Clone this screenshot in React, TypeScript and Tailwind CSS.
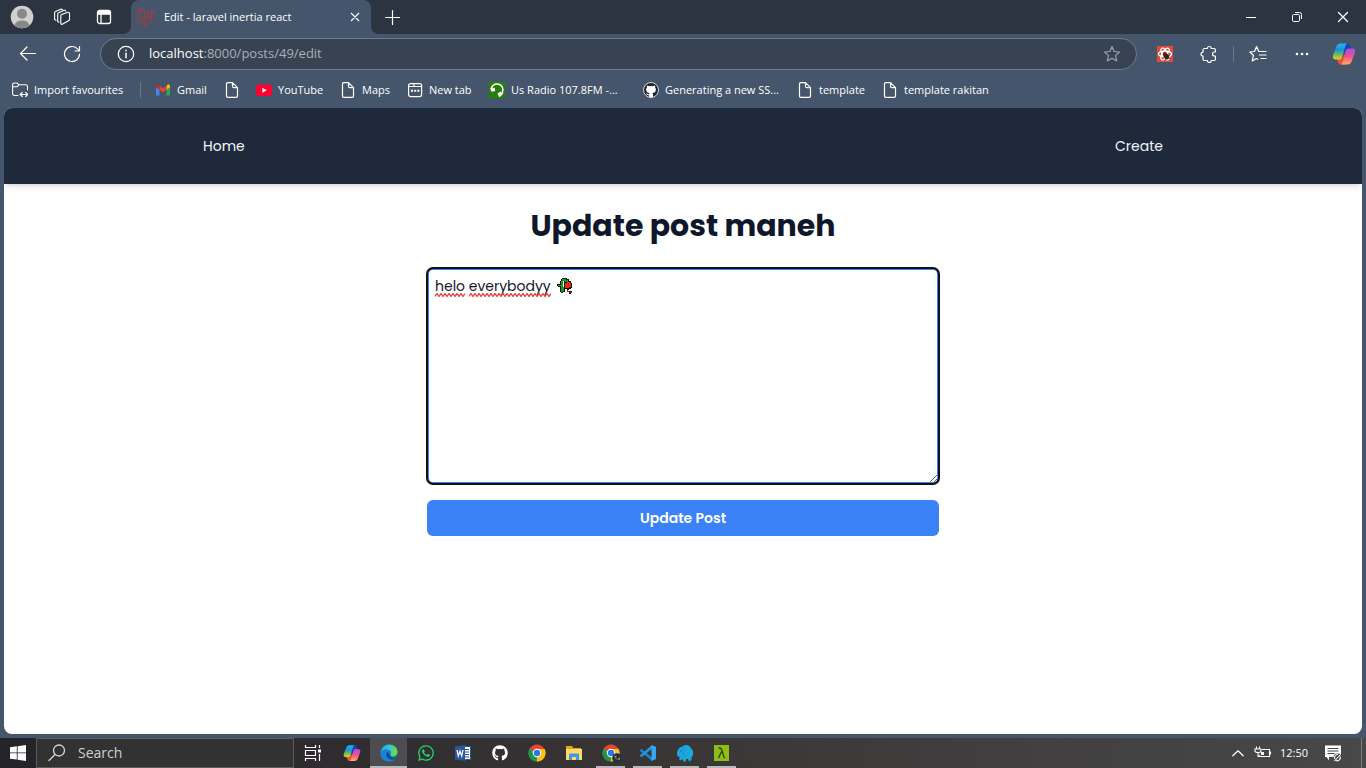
import React from 'react';
import { FaGithub, FaLaravel, FaWhatsapp } from 'react-icons/fa';

type IconProps = { className?: string };

const line = {
  fill: 'none',
  stroke: 'currentColor',
  strokeLinecap: 'round' as const,
  strokeLinejoin: 'round' as const,
};

function Avatar() {
  return (
    <svg viewBox="0 0 24 24" className="size-6">
      <clipPath id="avatar"><circle cx="12" cy="12" r="11.3" /></clipPath>
      <g clipPath="url(#avatar)">
        <rect width="24" height="24" fill="#d2d0ce" />
        <circle cx="12" cy="8.8" r="5" fill="#8a8886" />
        <path d="M4 24c0-6 3-8.500 8-8.500s8 2.500 8 8.500z" fill="#8a8886" />
      </g>
    </svg>
  );
}

function WorkspacesIcon() {
  return (
    <svg viewBox="0 0 18 18" className="size-[18px]" {...line} strokeWidth="1.1">
      <path d="M8.600 6.600 14.800 4.300a1.200 1.200 0 0 1 1.700 1.100v6a1.500 1.500 0 0 1-1 1.400l-5.800 3.300A1.200 1.200 0 0 1 7.800 15V8a1.500 1.500 0 0 1 .8-1.400z" />
      <path d="M6 14.200 4.700 13.500V6.200a1.500 1.500 0 0 1 1-1.400l5.300-2.500a1.500 1.500 0 0 1 1.800.7" />
      <path d="M3 12.200 1.600 11.500V4.800a1.500 1.500 0 0 1 1-1.400L7.600 1.200a1.500 1.500 0 0 1 1.700.5" />
    </svg>
  );
}

function TabActionsIcon() {
  return (
    <svg viewBox="0 0 16 16" className="size-4" {...line} strokeWidth="1.3">
      <rect x="1.5" y="1.500" width="13" height="13" rx="2" />
      <path d="M2 2.500h12v2.500H2z" fill="currentColor" />
      <path d="M5 5v9" />
    </svg>
  );
}

function CloseIcon({ className }: IconProps) {
  return (
    <svg viewBox="0 0 12 12" className={className} {...line} strokeWidth="1.3">
      <path d="m1.500 1.500 9 9M10.500 1.500l-9 9" />
    </svg>
  );
}

function PlusIcon() {
  return (
    <svg viewBox="0 0 16 16" className="size-4" {...line} strokeWidth="1.200">
      <path d="M8.500 1.500v14M1.500 8.500h14" />
    </svg>
  );
}

function BackIcon() {
  return (
    <svg viewBox="0 0 18 18" className="size-[18px]" {...line} strokeWidth="1.2">
      <path d="M16.500 8.500H1.500M8 2 1.500 8.500 8 15" />
    </svg>
  );
}

function ReloadIcon() {
  return (
    <svg viewBox="0 0 18 18" className="size-[18px]" {...line} strokeWidth="1.2">
      <path d="M16.500 9a7.500 7.500 0 1 1-2.300-5.400l2 2M16.500 1.500v4.500H12" />
    </svg>
  );
}

function InfoIcon() {
  return (
    <svg viewBox="0 0 18 18" className="size-[18px]" {...line} strokeWidth="1.2">
      <circle cx="9" cy="9" r="7.700" />
      <path d="M9 8.200v4.500M9 5.300v.5" strokeWidth="1.500" />
    </svg>
  );
}

function StarIcon() {
  return (
    <svg viewBox="0 0 18 18" className="size-[18px]" {...line} strokeWidth="1.200">
      <path d="m9 1.500 2.200 5 5.300.6-4 3.500 1.200 5.300L9 13.200l-4.700 2.700 1.200-5.300-4-3.500 5.300-.6z" />
    </svg>
  );
}

function FavouritesIcon() {
  return (
    <svg viewBox="0 0 18 18" className="size-[18px]" {...line} strokeWidth="1.2">
      <path d="M11 6.500H9.800L7.600 1.500 5.500 6.500l-4.700.5 3.600 3.300-1.200 5.700 4.300-2.500 1.300.8M12 6.500h5M10.500 10h6.500M12 13.500h5" />
    </svg>
  );
}

function PuzzleIcon() {
  return (
    <svg viewBox="0 0 18 18" className="size-[18px]" {...line} strokeWidth="1.2">
      <path d="M4.500 3.500h2.800a2 2 0 1 1 4 0h2.600a1.500 1.500 0 0 1 1.500 1.500v2h-.9a2 2 0 1 0 0 4h.9v3a1.500 1.500 0 0 1-1.500 1.500h-2.600a2 2 0 0 1-4 0H4.500A1.500 1.500 0 0 1 3 14v-2.800a2 2 0 1 1 0-4V5a1.500 1.500 0 0 1 1.500-1.500z" />
    </svg>
  );
}

function InertiaExtensionIcon() {
  return (
    <svg viewBox="0 0 16 16" className="size-4">
      <rect width="16" height="16" fill="#dd4b39" />
      <g fill="none" stroke="#fff" strokeWidth="1.300">
        <ellipse cx="8" cy="8" rx="6.500" ry="2.900" />
        <ellipse cx="8" cy="8" rx="6.500" ry="2.900" transform="rotate(60 8 8)" />
        <ellipse cx="8" cy="8" rx="6.500" ry="2.900" transform="rotate(120 8 8)" />
      </g>
      <ellipse cx="9.500" cy="10.500" rx="2.400" ry="3" fill="#32201e" transform="rotate(-35 9.500 10.500)" />
      <circle cx="7.500" cy="8" r="1.400" fill="#32201e" />
      <path d="m6 11.500 7-2.500M8 14l4-7M6 9.500l7 3" stroke="#32201e" strokeWidth=".7" />
    </svg>
  );
}

function CopilotIcon({ className, id }: IconProps & { id: string }) {
  return (
    <svg viewBox="0 0 24 24" className={className}>
      <defs>
        <linearGradient id={`${id}-a`} x1="0" y1="0" x2="0" y2="1">
          <stop offset="0" stopColor="#25b5ee" />
          <stop offset=".4" stopColor="#1a91dc" />
          <stop offset=".7" stopColor="#6fbf58" />
          <stop offset="1" stopColor="#f5c51c" />
        </linearGradient>
        <linearGradient id={`${id}-b`} x1="0" y1="0" x2="0" y2="1">
          <stop offset="0" stopColor="#a34fe8" />
          <stop offset=".5" stopColor="#ee5094" />
          <stop offset="1" stopColor="#ffb055" />
        </linearGradient>
      </defs>
      <path d="M10 1.500h5c2 0 2.700 1 3.300 3l.8 2.700h-3.600c-1.500 0-2.300.8-2.800 2.200l-1 3z" fill="#1941bd" />
      <path d="M14 22.500H9c-2 0-2.700-1-3.300-3l-.8-2.700h3.600c1.500 0 2.300-.8 2.800-2.200l1-3z" fill="#ee5237" />
      <path d="M15 1.500H8.500c-2.300 0-3.600 1.500-4.500 4L1.200 12.700c-1 3 .2 4.800 2.600 4.800h3.600c1.500 0 2.300-.8 2.800-2.200l3-10.600c.4-1.500.8-2.600 1.800-3.200z" fill={`url(#${id}-a)`} />
      <path d="M9 22.500h6.500c2.300 0 3.600-1.500 4.500-4l2.800-7.200c1-3-.2-4.800-2.600-4.800h-3.600c-1.500 0-2.300.8-2.800 2.200l-3 10.600c-.4 1.500-.8 2.600-1.800 3.200z" fill={`url(#${id}-b)`} />
    </svg>
  );
}

function FolderImportIcon() {
  return (
    <svg viewBox="0 0 16 16" className="size-4" {...line} strokeWidth="1.100">
      <path d="M6 13.500H2.200A1.700 1.700 0 0 1 .6 11.800V2.700A1.700 1.700 0 0 1 2.300 1H5l2 1.800h6.800a1.700 1.700 0 0 1 1.700 1.700V8M.8 4.800H5l2-2" />
      <path d="M8.500 12.500h7M10.200 10.500l-2 2 2 2M13.700 10.500l2 2-2 2" />
    </svg>
  );
}

function GmailIcon() {
  return (
    <svg viewBox="0 0 16 16" className="size-4">
      <path d="M1 4.500v8a1 1 0 0 0 1 1h2.500V7.200z" fill="#4285f4" />
      <path d="M15 4.500v8a1 1 0 0 1-1 1h-2.500V7.200z" fill="#34a853" />
      <path d="M11.500 3.800v4L15 5.200v-1c0-1.500-1.600-2.200-2.700-1.300z" fill="#fbbc04" />
      <path d="M1 5.200 4.500 7.800v-4l-.8-.9C2.600 2 1 2.700 1 4.200z" fill="#c5221f" />
      <path d="M4.500 3.700 8 6.300l3.500-2.600v4.100L8 10.400 4.500 7.800z" fill="#ea4335" />
    </svg>
  );
}

function FileIcon() {
  return (
    <svg viewBox="0 0 16 16" className="size-4" {...line} strokeWidth="1.200">
      <path d="M8.500.6H3.800A1.300 1.300 0 0 0 2.500 1.900v12.200a1.300 1.300 0 0 0 1.300 1.300h8.400a1.300 1.300 0 0 0 1.300-1.300V5.600zM8.500.6v3.700a1.300 1.300 0 0 0 1.300 1.300h3.700" />
    </svg>
  );
}

function YouTubeIcon() {
  return (
    <svg viewBox="0 0 16 16" className="size-4">
      <rect y="2.500" width="16" height="11.500" rx="2.800" fill="#ff0033" />
      <path d="M6.300 5.700v5L10.700 8.200z" fill="#fff" />
    </svg>
  );
}

function NewTabIcon() {
  return (
    <svg viewBox="0 0 16 16" className="size-4" {...line} strokeWidth="1.200">
      <rect x="1.600" y="1.600" width="13" height="13" rx="2" />
      <path d="M2 4.500h5V2.500M7 4.500h7.500" />
      <path d="M4 8.800h2M7.200 8.800h2M10.400 8.800h2" strokeWidth="2" strokeLinecap="butt" />
    </svg>
  );
}

function RadioIcon() {
  return (
    <svg viewBox="0 0 16 16" className="size-4">
      <rect width="16" height="16" fill="#258009" />
      <path d="M2.300 7C3 3.500 5.500 2 8.500 2.100c4 .2 6.500 4 5 8.400-.6 1.600-1.700 3-3 3.700" fill="none" stroke="#fff" strokeWidth="1.500" />
      <path d="M1.200 6.500 5.500 5.800 6.300 9 2.600 9.800z" fill="#fff" />
      <path d="m8.500 11.500 3.200-2 2 2.500-3.500 3.200z" fill="#fff" />
    </svg>
  );
}

function GithubBadge() {
  return (
    <svg viewBox="0 0 16 16" className="size-4">
      <circle cx="8" cy="8" r="7.500" fill="#20252b" stroke="#e4e6e8" strokeWidth=".9" />
      <path d="M6.100 15.200v-2c-2 .4-2.500-.8-3-1.600 1.300-.2 1.400 1 3 .6.100-.5.300-.9.500-1.100-2-.3-3.500-1.200-3.500-3.700 0-.8.300-1.500.8-2-.2-.8-.1-1.500.1-2 .7 0 1.400.4 2 .8a7 7 0 0 1 4 0c.6-.4 1.300-.8 2-.8.200.5.300 1.200.1 2 .5.500.8 1.200.8 2 0 2.500-1.500 3.400-3.500 3.700.4.400.6 1 .6 1.700v2.400z" fill="#fff" />
    </svg>
  );
}

function WindowsIcon() {
  return (
    <svg viewBox="0 0 16 16" className="size-4" fill="#fff">
      <path d="M0 2.300 6.800 1.300v6.200H0zM7.600 1.200 16 0v7.500H7.600zM0 8.300h6.800v6.300L0 13.700zM7.600 8.300H16V16l-8.400-1.200z" />
    </svg>
  );
}

function SearchIcon() {
  return (
    <svg viewBox="0 0 18 18" className="size-[18px] shrink-0" {...line} strokeWidth="1.300">
      <circle cx="11" cy="6.500" r="5.500" />
      <path d="m7 10.500-6 6" />
    </svg>
  );
}

function TaskViewIcon() {
  return (
    <svg viewBox="0 0 18 18" className="size-[18px]" fill="none" stroke="#fff" strokeWidth="1.200">
      <path d="M1.500 1v2.500h10V1M1.500 6.500h10v5h-10zM1.500 17v-2.500h10V17M15.500 1v3M15.500 10v7" />
      <path d="M14 5.500h3v3h-3z" fill="#fff" stroke="none" />
    </svg>
  );
}

function EdgeIcon() {
  return (
    <svg viewBox="0 0 18 18" className="size-[18px]">
      <defs>
        <linearGradient id="edge-top" x1="0" y1="0" x2="1" y2=".3">
          <stop offset="0" stopColor="#249fe3" />
          <stop offset=".5" stopColor="#30c5d4" />
          <stop offset="1" stopColor="#69dc4d" />
        </linearGradient>
      </defs>
      <circle cx="9" cy="9" r="8.500" fill="#1473bd" />
      <path d="M.5 9.500C.8 4 4.300.5 9 .5c5 0 8.500 3.400 8.500 7.500 0 2.700-2 4.400-4.600 4.400-1.700 0-2.800-.6-2.800-1.300 0-.5.900-.8.900-2 0-2-2-3.500-4.500-3.500S1 7 .5 9.500z" fill="url(#edge-top)" />
      <path d="M7.200 8.200C5 10.500 6 15.500 11.500 16c2.200.2 3.700-.8 4.500-1.700-1.500 2-3.800 3.200-6.500 3.200C4 17.500.5 14 .5 9.500.8 7.200 3 5.500 6 5.600c3 0 5 1.500 5 3.500 0 1-.7 1.300-.9 1.900-.9-.2-1.600-2.800-2.900-2.800z" fill="#1b83d3" />
      <path d="M7 8.300c-1.500 2.500.2 6.300 4.500 7 2 .3 3.800-.4 4.600-1.300-2 .8-5.600.2-6-2.700C9.200 11 9 8.200 7 8.300z" fill="#0b4a8d" />
    </svg>
  );
}

function WordIcon() {
  return (
    <svg viewBox="0 0 18 18" className="size-[18px]">
      <path d="M9 2.500h7.500v13H9z" fill="#fff" stroke="#2b579a" />
      <path d="M11 5.500h4M11 8h4M11 10.500h4M11 13h4" stroke="#2b579a" />
      <path d="M1 2.500 11 1v16L1 15.500z" fill="#2b579a" />
      <path d="m3 6 1.300 6L6 7l1.700 5L9 6" fill="none" stroke="#fff" strokeWidth="1.200" />
    </svg>
  );
}

function ChromeIcon() {
  return (
    <svg viewBox="0 0 18 18" className="size-[18px]">
      <path d="M9 9 1.640 4.750A8.500 8.500 0 0 1 16.360 4.750z" fill="#ea4335" />
      <path d="M9 9 16.360 4.750A8.500 8.500 0 0 1 9 17.500z" fill="#fbbc04" />
      <path d="M9 9v8.500A8.500 8.500 0 0 1 1.640 4.750z" fill="#34a853" />
      <path d="M9 5h7.500a8.500 8.500 0 0 1-7.500 12.500L12.500 11z" fill="#fbc116" />
      <path d="M1.640 4.750 5.500 11 9 13l-1.200 4.500A8.500 8.500 0 0 1 1.640 4.750z" fill="#229342" />
      <circle cx="9" cy="9" r="4.200" fill="#fff" />
      <circle cx="9" cy="9" r="3.200" fill="#2878e8" />
    </svg>
  );
}

function ChromeProfileIcon() {
  return (
    <span className="relative flex">
      <ChromeIcon />
      <svg viewBox="0 0 10 10" className="absolute -right-0.5 -bottom-px size-[10px]">
        <circle cx="5" cy="5" r="4.800" fill="#15344b" />
        <path d="M2 2.500 7.500 4 8 7 4 6z" fill="#c58c54" />
        <circle cx="5.500" cy="4.500" r="1.200" fill="#0c1117" />
      </svg>
    </span>
  );
}

function ExplorerIcon() {
  return (
    <svg viewBox="0 0 18 18" className="size-[18px]">
      <path d="M1 2h6l1.500 2H16v4H1z" fill="#e5a50e" />
      <path d="M1 5h16v11H1z" fill="#ffd967" />
      <path d="M4 16V10.500a1 1 0 0 1 1-1h8a1 1 0 0 1 1 1V16h-3v-3H7v3z" fill="#3d9ae6" />
    </svg>
  );
}

function VsCodeIcon() {
  return (
    <svg viewBox="0 0 18 18" className="size-[18px]">
      <path d="M1.200 5.800 2.500 4.900 13 13.500V17L1 7z" fill="#1b86cf" />
      <path d="M1 11.200 13 1v3.800L2.500 13.200 1.200 12.300z" fill="#2196df" />
      <path d="M12.500 1 17 3v12l-4.500 2z" fill="#34a9f0" />
    </svg>
  );
}

function HeidiIcon() {
  return (
    <svg viewBox="0 0 18 18" className="size-[18px]">
      <path d="M9 1c2.500-.5 5 .5 5.800 3C17 6 18 9 16.500 12l-1 1.500V16l-2.500 1.500L12 15h-2v2.500H7.500L6.500 15l-2 1.500-1.500-1.500L4 13C1.500 13 .7 11 1 8.500 1.500 5 3.500 3 6 2.500z" fill="#1ca6dc" />
      <path d="M8 3.500C6 6 6 9.500 8.500 11" fill="none" stroke="#138fc2" strokeWidth=".9" />
      <circle cx="4.500" cy="7" r=".6" fill="#0b5c86" />
    </svg>
  );
}

function LambdaIcon() {
  return (
    <svg viewBox="0 0 16 16" className="size-4">
      <rect y="0" width="15" height="16" fill="#8cbd18" />
      <path d="M4.500 3h1.300c1.200 0 1.500.6 2 2l2.200 7c.2.700.5.800 1.200.7M7.600 6.500 4.500 13" fill="none" stroke="#33420e" strokeWidth="1.300" />
    </svg>
  );
}

function BatteryIcon() {
  return (
    <svg viewBox="0 0 18 14" className="h-[14px] w-[18px]" fill="none" stroke="#fff" strokeWidth="1.100">
      <path d="M8 3.500h7.500v7H5.500V9M16.500 5.500v3" />
      <path d="M2.500.5v2.500M5.500.5v2.500M1 3h6v2c0 1-1 1.500-3 1.500S1 6 1 5zM4 6.500v4h2" />
      <path d="M7 6h3v3H7z" fill="#fff" stroke="none" />
    </svg>
  );
}

function NotificationsIcon() {
  return (
    <svg viewBox="0 0 18 18" className="size-[18px]">
      <path d="M1 1.500h16V13H5v3.500L2.500 13H1z" fill="#fff" />
      <path d="M3.500 4.500h11M3.500 7h11M3.500 9.500h7" stroke="#444" />
      <circle cx="13.500" cy="13.500" r="4" fill="#454545" />
      <path d="M11 15a3 3 0 0 1 3-4.500M16 12.500a3 3 0 0 1-4 4M10.500 17l6-6.500" stroke="#fff" fill="none" strokeWidth="1.100" />
    </svg>
  );
}

function WiltedRose() {
  return (
    <svg viewBox="0 0 16 16" className="size-4" shapeRendering="crispEdges">
      <path d="M5 0h5v1h2v2h2v2h1v5h-1v1h-2v1h-2v-1H8v3H6v1H4v-1H3V9H1V8H0V6h3V3h1V1h1z" fill="#0d130d" />
      <path d="M5 1h4v1h2v2H8V3H6v6h1v4H6v1H4V8H1V7h3V3h1z" fill="#159a2c" />
      <path d="M6 3h1v6H6z" fill="#fff" />
      <path d="M8 5h2V4h3v1h1v4h-2v1H8z" fill="#e32b10" />
      <path d="M10 12h1v1h1v1h3v1h-3v-1h-2z" fill="#b81d14" />
      <path d="M10 11h2v1h-2zM12 13h3v1h-3zM12 15h2v1h-2z" fill="#0d130d" />
    </svg>
  );
}

const bookmarks = [
  { label: 'Gmail', icon: <GmailIcon />, width: 'w-[31px]' },
  { label: '', icon: <FileIcon />, width: '' },
  { label: 'YouTube', icon: <YouTubeIcon />, width: 'w-[46px]' },
  { label: 'Maps', icon: <FileIcon />, width: 'w-[29px]' },
  { label: 'New tab', icon: <NewTabIcon />, width: 'w-[44px]' },
  { label: 'Us Radio 107.8FM -...', icon: <RadioIcon />, width: 'w-[116px]' },
  { label: 'Generating a new SS...', icon: <GithubBadge />, width: 'w-[116px]' },
  { label: 'template', icon: <FileIcon />, width: 'w-[47px]' },
  { label: 'template rakitan', icon: <FileIcon />, width: 'w-[87px]' },
];

const taskbarApps = [
  { name: 'Copilot', icon: <CopilotIcon id="task" className="size-[18px]" />, state: '' },
  { name: 'Microsoft Edge', icon: <EdgeIcon />, state: 'active' },
  { name: 'WhatsApp', icon: <FaWhatsapp className="size-[18px] text-[#25d366]" />, state: '' },
  { name: 'Word', icon: <WordIcon />, state: '' },
  { name: 'GitHub Desktop', icon: <FaGithub className="size-4 text-white" />, state: '' },
  { name: 'Google Chrome', icon: <ChromeIcon />, state: '' },
  { name: 'File Explorer', icon: <ExplorerIcon />, state: '' },
  { name: 'Google Chrome profile', icon: <ChromeProfileIcon />, state: 'open' },
  { name: 'Visual Studio Code', icon: <VsCodeIcon />, state: 'open' },
  { name: 'Database client', icon: <HeidiIcon />, state: 'open' },
  { name: 'Terminal', icon: <LambdaIcon />, state: 'open' },
];

function TabStrip() {
  return (
    <div className="flex h-[34px] items-stretch bg-[#2b3440]">
      <div className="flex w-[131px] shrink-0 items-center">
        <button aria-label="Profile" className="flex w-11 justify-center"><Avatar /></button>
        <button aria-label="Workspaces" className="flex w-9 justify-center"><WorkspacesIcon /></button>
        <button aria-label="Tab actions" className="flex w-12 justify-center"><TabActionsIcon /></button>
      </div>
      <div className="relative flex w-60 items-center rounded-t-lg bg-[#45556b] pr-[11px] pl-1.5">
        <svg viewBox="0 0 8 8" className="absolute bottom-0 -left-2 size-2" fill="#45556b"><path d="M8 0v8H0a8 8 0 0 0 8-8z" /></svg>
        <svg viewBox="0 0 8 8" className="absolute -right-2 bottom-0 size-2" fill="#45556b"><path d="M0 0v8h8a8 8 0 0 1-8-8z" /></svg>
        <FaLaravel className="size-[18px] text-[#e02d28]" />
        <span className="ml-[9px] flex-1 text-[11px] whitespace-nowrap">Edit - laravel inertia react</span>
        <button aria-label="Close tab"><CloseIcon className="size-2.5" /></button>
      </div>
      <button aria-label="New tab" className="flex w-[42px] items-center justify-center"><PlusIcon /></button>
      <div className="ml-auto flex">
        <button aria-label="Minimise" className="flex w-[46px] items-center justify-center">
          <svg viewBox="0 0 10 10" className="size-2.5"><path d="M0 5.500h10" stroke="#fff" /></svg>
        </button>
        <button aria-label="Restore" className="flex w-[46px] items-center justify-center">
          <svg viewBox="0 0 10 10" className="size-2.5" fill="none" stroke="#fff">
            <rect x=".5" y="2.500" width="7" height="7" rx="1.200" />
            <path d="M3 .5h4.500a2 2 0 0 1 2 2V7" />
          </svg>
        </button>
        <button aria-label="Close" className="flex w-[46px] items-center justify-center"><CloseIcon className="size-3" /></button>
      </div>
    </div>
  );
}

function Toolbar() {
  return (
    <div className="flex h-10 items-center pr-0.5">
      <button aria-label="Back" className="ml-1.5 flex w-11 justify-center"><BackIcon /></button>
      <button aria-label="Reload" className="flex w-11 justify-center"><ReloadIcon /></button>
      <div className="ml-1.5 flex h-8 flex-1 items-center rounded-full border border-[#707b89] bg-[#374352] pr-[15px] pl-4">
        <InfoIcon />
        <p className="ml-3.5 flex-1 text-[13px] text-[#a9afb7]"><span className="text-white">localhost</span>:8000/posts/49/edit</p>
        <button aria-label="Add to favourites" className="text-[#98a0aa]"><StarIcon /></button>
      </div>
      <button aria-label="Inertia extension" className="ml-1.5 flex w-11 justify-center"><InertiaExtensionIcon /></button>
      <button aria-label="Extensions" className="flex w-11 justify-center"><PuzzleIcon /></button>
      <span className="ml-0.5 h-4 w-px bg-[#6b7889]" />
      <button aria-label="Favourites" className="ml-0.5 flex w-11 justify-center"><FavouritesIcon /></button>
      <button aria-label="Settings and more" className="flex w-11 justify-center">
        <svg viewBox="0 0 14 4" className="h-1 w-3.5" fill="#fff"><circle cx="2" cy="2" r="1.300" /><circle cx="7" cy="2" r="1.300" /><circle cx="12" cy="2" r="1.300" /></svg>
      </button>
      <button aria-label="Copilot" className="flex w-10 justify-center"><CopilotIcon id="bar" className="size-6" /></button>
    </div>
  );
}

function BookmarksBar() {
  return (
    <div className="flex h-[34px] items-center gap-4 overflow-hidden pb-0.5 pl-3 text-[11px]">
      <button className="flex shrink-0 items-center gap-1.5">
        <FolderImportIcon />
        <span className="w-[91px] text-left whitespace-nowrap">Import favourites</span>
      </button>
      <span className="-mr-0.5 -ml-px h-4 w-px shrink-0 bg-[#6b7889]" />
      {bookmarks.map((b, i) => (
        <a key={i} href="#" aria-label={b.label || 'Page'} className="flex shrink-0 items-center gap-1.5">
          {b.icon}
          {b.label && <span className={`whitespace-nowrap ${b.width}`}>{b.label}</span>}
        </a>
      ))}
    </div>
  );
}

function EditPostPage() {
  return (
    <div className="mx-1 mb-1 flex flex-1 flex-col overflow-hidden rounded-lg bg-white font-['Poppins','Inter',sans-serif] text-[#0f172a]">
      <header className="bg-[#1e293b] shadow-md">
        <nav className="mx-auto flex h-[76px] max-w-5xl items-center justify-between px-8 text-sm text-[#f1f5f9]">
          <a href="#">Home</a>
          <a href="#">Create</a>
        </nav>
      </header>
      <main className="mx-auto w-full max-w-lg pt-6">
        <h1 className="text-center text-3xl font-bold">Update post maneh</h1>
        <form className="mt-6 flex flex-col gap-4" onSubmit={(e) => e.preventDefault()}>
          <div className="relative flex">
            <textarea
              aria-label="Post body"
              rows={10}
              spellCheck={false}
              defaultValue="helo everybodyy"
              className="w-full rounded-md border border-black bg-white px-[7px] py-[7px] text-sm outline-2 -outline-offset-1 outline-[#101010] shadow-[inset_0_0_0_1px_#3b82f6]"
            />
            <svg viewBox="0 0 116 4" className="pointer-events-none absolute top-[25px] left-2 h-1 w-[116px]" fill="none" stroke="#f03a3a" strokeWidth="1.300">
              <path d="m0 3.500 2-3 2 3 2-3 2 3 2-3 2 3 2-3 2 3 2-3 2 3 2-3 2 3 2-3 2 3 2-3M34 3.500l2-3 2 3 2-3 2 3 2-3 2 3 2-3 2 3 2-3 2 3 2-3 2 3 2-3 2 3 2-3 2 3 2-3 2 3 2-3 2 3 2-3 2 3 2-3 2 3 2-3 2 3 2-3 2 3 2-3 2 3 2-3 2 3 2-3 2 3 2-3 2 3 2-3 2 3 2-3 2 3 2-3" />
            </svg>
            <span className="pointer-events-none absolute top-2.5 left-[130px]"><WiltedRose /></span>
          </div>
          <button className="h-9 rounded-md bg-[#3b82f6] text-sm font-semibold text-white">Update Post</button>
        </form>
      </main>
    </div>
  );
}

function Taskbar() {
  return (
    <footer className="flex h-[30px] items-stretch bg-linear-to-r from-[#25232a] via-[#3a3636] to-[#484848]">
      <button aria-label="Start" className="flex w-9 items-center justify-center"><WindowsIcon /></button>
      <label className="flex w-[258px] items-center gap-3 border border-[#5c5c5c] bg-[#323232] pl-[11px] text-[#d8d8d8]">
        <SearchIcon />
        <input aria-label="Search" placeholder="Search" className="w-full bg-transparent text-sm outline-none placeholder:text-[#d0d0d0]" />
      </label>
      <button aria-label="Task view" className="mr-px flex w-[38px] items-center justify-center"><TaskViewIcon /></button>
      {taskbarApps.map((app) => (
        <button
          key={app.name}
          aria-label={app.name}
          className={`relative flex w-[37px] items-center justify-center ${app.state === 'active' ? 'bg-[#4d4d4f]' : ''}`}
        >
          {app.icon}
          {app.state === 'active' && <span className="absolute inset-x-0 bottom-0 h-0.5 bg-[#b9b9b9]" />}
          {app.state === 'open' && <span className="absolute inset-x-1 bottom-0 h-0.5 bg-[#b9b9b9]" />}
        </button>
      ))}
      <div className="ml-auto flex items-center">
        <button aria-label="Show hidden icons">
          <svg viewBox="0 0 12 8" className="h-2 w-3" {...line} strokeWidth="1.200"><path d="m.8 6.800 5.200-5 5.200 5" /></svg>
        </button>
        <button aria-label="Battery" className="ml-2.5"><BatteryIcon /></button>
        <time className="ml-2 w-7 text-[11px]">12:50</time>
        <button aria-label="Notifications" className="ml-4"><NotificationsIcon /></button>
        <span className="ml-[19px] h-[30px] w-px bg-[#7c7c7c]" />
        <span className="w-1" />
      </div>
    </footer>
  );
}

export default function App() {
  return (
    <div className="flex min-h-screen flex-col bg-[#45556b] font-['Segoe_UI','Open_Sans',sans-serif] text-white">
      <TabStrip />
      <Toolbar />
      <BookmarksBar />
      <EditPostPage />
      <Taskbar />
    </div>
  );
}
